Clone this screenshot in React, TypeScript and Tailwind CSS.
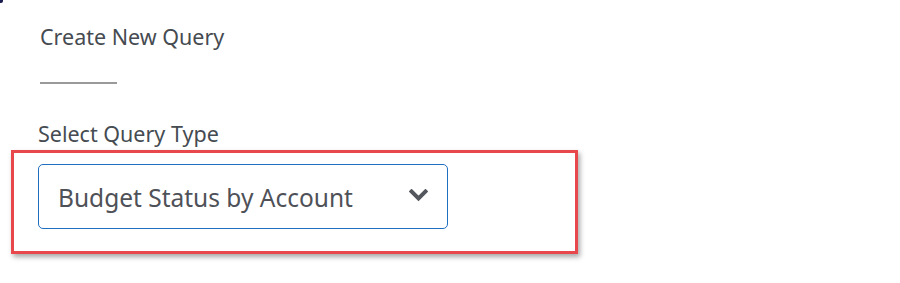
export default function App() {
  return (
    <div
      className="relative w-[900px] h-[283px] bg-white overflow-hidden"
      style={{ fontFamily: '"Noto Sans", "Open Sans", sans-serif' }}
    >
      {/* stray corner mark */}
      <div className="absolute left-0 top-0 w-[3px] h-[3px] bg-[#1c1c4e] rounded-br-[2px]" />

      <div className="flex flex-col pt-[23px]">
        <div className="pl-[40px]">
          <h2 className="text-[21.5px] leading-[28px] text-[#454b51]">Create New Query</h2>
          <div className="mt-[31px] w-[77px] h-[2px] bg-[#9a9a9a]" />
        </div>

        <label className="pl-[38px] mt-[37px] text-[21.5px] leading-[26px] text-[#454b51]">
          Select Query Type
        </label>

        <div className="ml-[11px] mt-[3px] w-[567px] h-[104px] border-[3px] border-[#e8474b] shadow-[2px_3px_5px_rgba(0,0,0,0.35)] pl-[24px] pt-[11px]">
          <div className="flex items-center justify-between w-[410px] h-[65px] rounded-[5px] border border-[#1f6fc0] pl-[19px] pr-[19px]">
            <span className="mt-[4px] text-[24.5px] text-[#4f5158]">Budget Status by Account</span>
            <svg width="19" height="13" viewBox="0 0 19 13" className="mt-[-2px]">
              <polyline
                points="2.5,2.5 9.5,9.5 16.5,2.5"
                fill="none"
                stroke="#55575e"
                strokeWidth="4"
                strokeLinecap="square"
              />
            </svg>
          </div>
        </div>
      </div>
    </div>
  );
}
